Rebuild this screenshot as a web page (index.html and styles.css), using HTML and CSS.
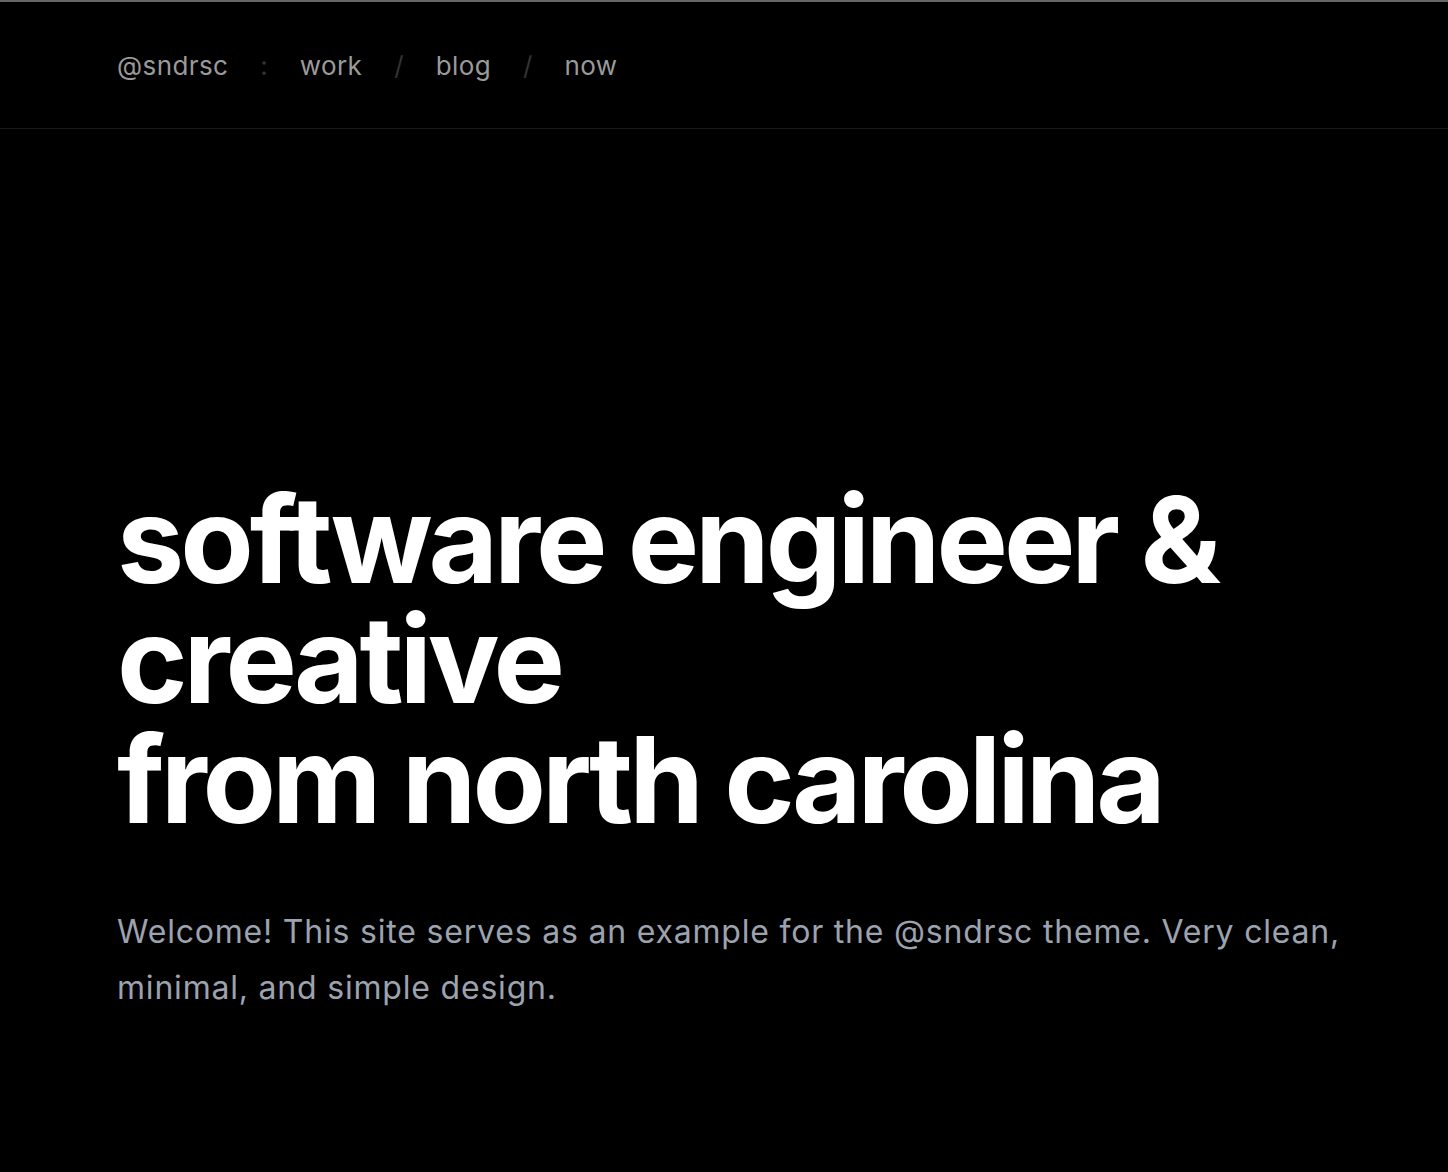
FILE: index.html
```html
<!DOCTYPE html>
<html lang="en">
<head>
<meta charset="utf-8">
<title>@sndrsc</title>
<link rel="stylesheet" href="styles.css">
</head>
<body>
<div class="topbar"></div>
<header class="site-header">
  <nav class="nav container">
    <a class="nav-link" href="#">@sndrsc</a>
    <span class="sep">:</span>
    <a class="nav-link" href="#">work</a>
    <span class="sep">/</span>
    <a class="nav-link" href="#">blog</a>
    <span class="sep">/</span>
    <a class="nav-link" href="#">now</a>
  </nav>
</header>
<main class="hero container">
  <h1 class="hero-title">software engineer &amp; creative<br>from north carolina</h1>
  <p class="hero-text">Welcome! This site serves as an example for the @sndrsc theme. Very clean, minimal, and simple design.</p>
</main>
</body>
</html>
```
FILE: styles.css
```css
html, body {
  margin: 0;
  padding: 0;
  background: #000;
}
body {
  font-family: Inter, "Noto Sans", sans-serif;
  color: #fff;
  -webkit-font-smoothing: antialiased;
}
.topbar {
  height: 2px;
  background: #666;
}
.container {
  box-sizing: border-box;
  width: 100%;
  padding: 0 90px 0 117px;
}
.site-header {
  border-bottom: 1px solid #1a1a1a;
}
.nav {
  display: flex;
  align-items: center;
  gap: 32px;
  height: 126px;
}
.nav-link {
  color: #9a9a9a;
  text-decoration: none;
  font-size: 26px;
  font-weight: 400;
  letter-spacing: 0.4px;
}
.sep {
  color: #333;
  font-size: 26px;
}
.hero {
  padding-top: 351px;
}
.hero-title {
  margin: 0;
  font-size: 120px;
  line-height: 120px;
  font-weight: 700;
  letter-spacing: -0.034em;
}
.hero-text {
  margin: 64px 0 0;
  color: #9ca3af;
  font-size: 32px;
  line-height: 56px;
  letter-spacing: 0.8px;
}
```
